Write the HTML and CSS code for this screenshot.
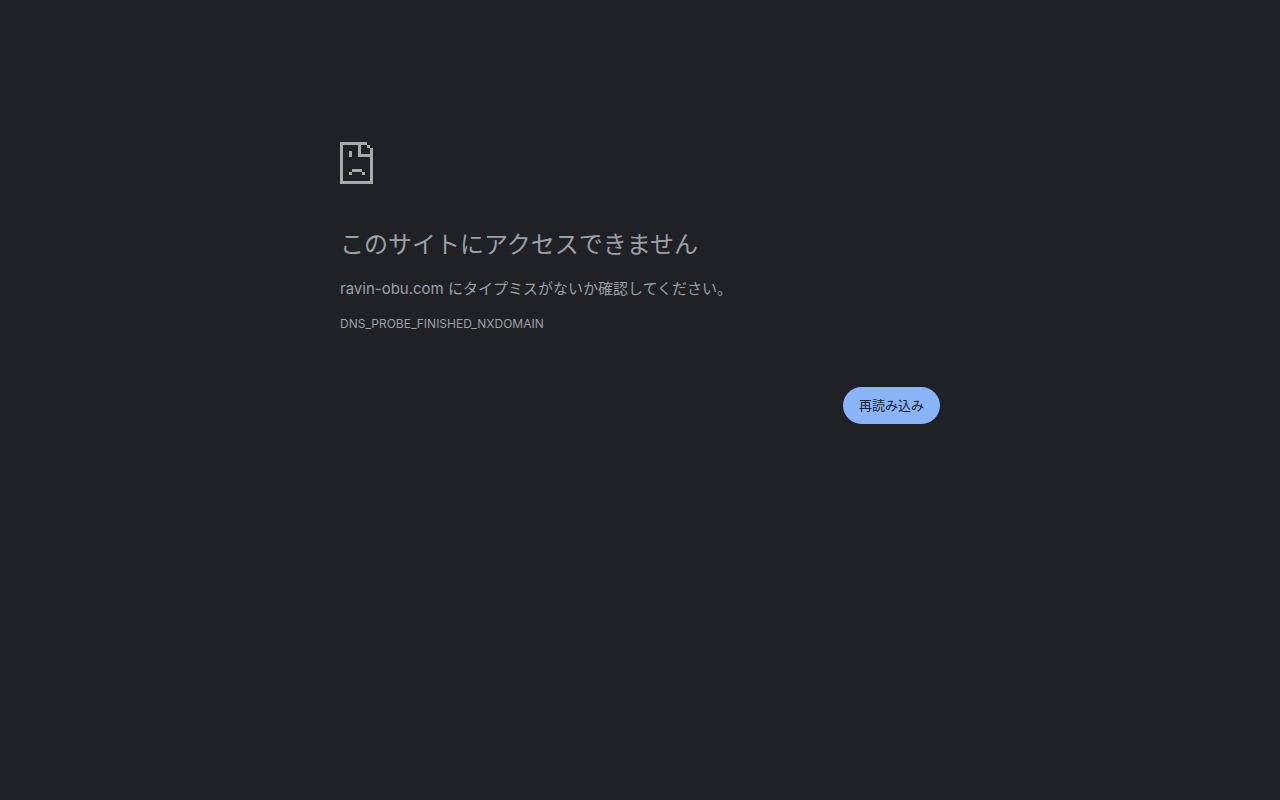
FILE: index.html
```html
<!DOCTYPE html>
<html lang="ja">
  <head>
    <meta charset="UTF-8" />
    <meta name="viewport" content="width=device-width, initial-scale=1.0" />
    <title>ravin-obu.com</title>
    <link rel="stylesheet" href="styles.css">
  </head>
  <body>
    <main class="interstitial">
      <svg class="icon" viewBox="0 0 33 42" shape-rendering="crispEdges" aria-hidden="true">
        <path d="M0 0h27v3h3v3h3v36H0zM3 3v36h27V15H18V3zM21 3v9h9V6h-3V3z" fill-rule="evenodd" />
        <path d="M9 9h3v6H9zM12 27h10v3H12zM9 30h3v3H9zM22 30h3v3h-3z" />
      </svg>
      <h1 class="heading">このサイトにアクセスできません</h1>
      <p class="summary">ravin-obu.com にタイプミスがないか確認してください。</p>
      <div class="error-code">DNS_PROBE_FINISHED_NXDOMAIN</div>
      <div class="buttons">
        <button class="reload-btn" id="reloadBtn" type="button">再読み込み</button>
      </div>
    </main>

    <script>
      document.getElementById("reloadBtn").addEventListener("click", function () {
        location.reload();
      });
    </script>
  </body>
</html>
```
FILE: styles.css
```css
* {
  margin: 0;
  padding: 0;
  box-sizing: border-box;
}
body {
  font-family: Inter, "Noto Sans CJK JP", sans-serif;
  font-size: 15px;
  line-height: 24px;
  background: #202124;
  color: #9aa0a6;
}
.interstitial {
  max-width: 600px;
  width: 100%;
  margin: 0 auto;
  padding-top: 142px;
}
.icon {
  display: block;
  width: 33px;
  height: 42px;
  margin-bottom: 45px;
  fill: #aaa;
}
.heading {
  font-size: 24px;
  font-weight: 400;
  line-height: 32px;
  margin-bottom: 16px;
}
.summary {
  margin-bottom: 11px;
}
.error-code {
  font-size: 12px;
}
.buttons {
  display: flex;
  justify-content: flex-end;
  margin-top: 51px;
}
.reload-btn {
  background: #8ab4f8;
  color: #202124;
  border: none;
  border-radius: 20px;
  padding: 8px 16px;
  font-family: inherit;
  font-size: 13px;
  line-height: 21px;
  cursor: pointer;
}
.reload-btn:hover {
  background: #aecbfa;
}
@media (max-width: 640px) {
  .interstitial {
    padding: 48px 24px;
  }
}
```
